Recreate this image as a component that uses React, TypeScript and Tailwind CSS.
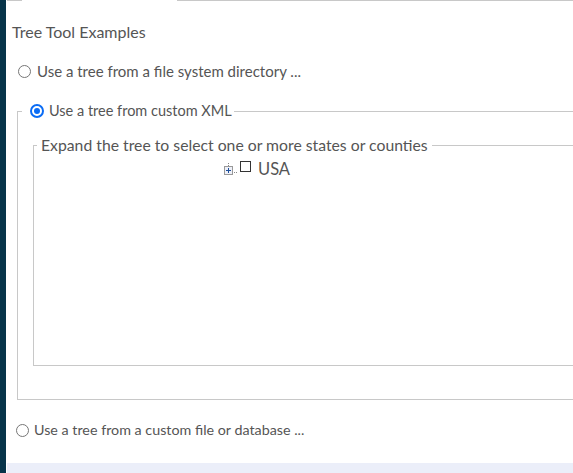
import React from "react";

function Radio({ checked }: { checked?: boolean }) {
  return checked ? (
    <span className="inline-block w-[14px] h-[14px] rounded-full border-[2px] border-[#0a6cf5] bg-white p-[2px] box-border">
      <span className="block w-full h-full rounded-full bg-[#0a6cf5]" />
    </span>
  ) : (
    <span className="inline-block w-[13px] h-[13px] rounded-full border border-[#767676] bg-white box-border" />
  );
}

export default function App() {
  return (
    <div className="w-[573px] h-[473px] overflow-hidden flex bg-white font-['Lato',sans-serif] text-[15px] text-[#555]">
      <div className="w-[6px] shrink-0 bg-[#07344a]" />
      <div className="flex-1 flex flex-col min-w-0">
        <div className="flex h-px shrink-0">
          <div className="ml-[1px] w-[15px] bg-[#c8c8c8]" />
          <div className="w-[155px]" />
          <div className="flex-1 bg-[#c8c8c8]" />
        </div>
        <div className="pl-[6px] mt-[21px] h-[20px] leading-[20px] text-[16px]">Tree Tool Examples</div>
        <div className="flex items-center ml-[12px] mt-[19px] h-[20px] leading-[20px]">
          <Radio />
          <span className="ml-[6px]">Use a tree from a file system directory ...</span>
        </div>
        <fieldset className="ml-[11px] mt-[20px] w-[700px] h-[299px] border border-[#c8c8c8] pl-[4px] pr-0 pb-0">
          <legend className="pl-[8px] pr-[2px] h-[20px] leading-[20px] flex items-center text-[14.5px]">
            <Radio checked />
            <span className="ml-[5px]">Use a tree from custom XML</span>
          </legend>
          <fieldset className="ml-[11px] mt-[14px] w-[650px] h-[231px] border border-[#c8c8c8] pl-[3px]">
            <legend className="px-[4px] h-[20px] leading-[20px] text-[15.75px]">Expand the tree to select one or more states or counties</legend>
            <div className="flex items-center ml-[187px] mt-[4px] h-[20px]">
              <svg width="16" height="14" viewBox="0 0 16 14" className="mt-[1px]">
                <line x1="4.5" y1="0" x2="4.5" y2="3" stroke="#888" strokeDasharray="1 1" />
                <rect x="0.5" y="3.5" width="8" height="8" fill="#eef0f8" stroke="#999" />
                <line x1="2" y1="7.5" x2="7" y2="7.5" stroke="#1d4f9a" />
                <line x1="4.5" y1="5" x2="4.5" y2="10" stroke="#1d4f9a" />
                <line x1="10" y1="9.5" x2="14" y2="9.5" stroke="#888" strokeDasharray="1 1" />
              </svg>
              <span className="inline-block w-[11px] h-[11px] border border-[#333] bg-white -mt-[6px] box-border" />
              <span className="ml-[7px] text-[16.5px]">USA</span>
            </div>
          </fieldset>
        </fieldset>
        <div className="flex items-center ml-[10px] mt-[20px] h-[20px] leading-[20px] text-[14.3px]">
          <Radio />
          <span className="ml-[5px]">Use a tree from a custom file or database ...</span>
        </div>
        <div className="mt-auto h-[10px] bg-[#ebeef9] ml-[1px]" />
      </div>
    </div>
  );
}
